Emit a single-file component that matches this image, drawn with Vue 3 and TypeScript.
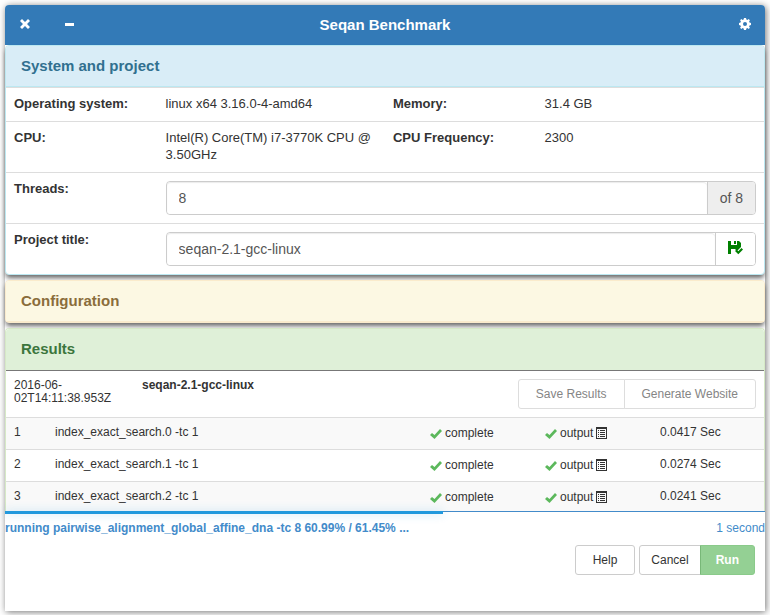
<script setup lang="ts">
import { ref } from 'vue'

interface ResultRow {
  id: number
  name: string
  seconds: string
}

const threads = ref('8')
const maxThreads = 8
const projectTitle = ref('seqan-2.1-gcc-linux')

const results: ResultRow[] = [
  { id: 1, name: 'index_exact_search.0 -tc 1', seconds: '0.0417' },
  { id: 2, name: 'index_exact_search.1 -tc 1', seconds: '0.0274' },
  { id: 3, name: 'index_exact_search.2 -tc 1', seconds: '0.0241' },
]

const progress = ref(57.6)
</script>

<template>
  <div class="window">
    <header class="titlebar">
      <div class="titlebar-actions">
        <button type="button" class="icon-button" aria-label="Close">
          <svg width="12" height="12" viewBox="0 0 12 12">
            <path d="M3 1 6 4 9 1 11 3 8 6 11 9 9 11 6 8 3 11 1 9 4 6 1 3Z" fill="currentColor" />
          </svg>
        </button>
        <button type="button" class="icon-button" aria-label="Minimize">
          <svg width="12" height="12" viewBox="0 0 12 12">
            <rect x="1" y="5" width="9" height="3" fill="currentColor" />
          </svg>
        </button>
      </div>
      <h1>Seqan Benchmark</h1>
      <div class="titlebar-actions end">
        <button type="button" class="icon-button" aria-label="Settings">
          <svg width="12" height="12" viewBox="0 0 12 12">
            <path
              fill="currentColor"
              fill-rule="evenodd"
              d="M5 0H7L7.4 1.5 8.4 1.9 9.7 1.1 10.9 2.3 10.1 3.6 10.5 4.6 12 5V7L10.5 7.4 10.1 8.4 10.9 9.7 9.7 10.9 8.4 10.1 7.4 10.5 7 12H5L4.6 10.5 3.6 10.1 2.3 10.9 1.1 9.7 1.9 8.4 1.5 7.4 0 7V5L1.5 4.6 1.9 3.6 1.1 2.3 2.3 1.1 3.6 1.9 4.6 1.5ZM6 4a2 2 0 1 0 0 4 2 2 0 0 0 0-4Z"
            />
          </svg>
        </button>
      </div>
    </header>

    <section class="panel info">
      <h2>System and project</h2>
      <table class="system">
        <tbody>
          <tr>
            <th scope="row">Operating system:</th>
            <td class="wide">linux x64 3.16.0-4-amd64</td>
            <th scope="row">Memory:</th>
            <td class="wide">31.4 GB</td>
          </tr>
          <tr>
            <th scope="row">CPU:</th>
            <td>Intel(R) Core(TM) i7-3770K CPU @ 3.50GHz</td>
            <th scope="row">CPU Frequency:</th>
            <td>2300</td>
          </tr>
          <tr>
            <th scope="row"><label for="threads">Threads:</label></th>
            <td colspan="3">
              <div class="input-group">
                <input id="threads" v-model="threads" type="text" />
                <span class="addon">of {{ maxThreads }}</span>
              </div>
            </td>
          </tr>
          <tr>
            <th scope="row"><label for="title">Project title:</label></th>
            <td colspan="3">
              <div class="input-group">
                <input id="title" v-model="projectTitle" type="text" />
                <button type="button" class="save" aria-label="Save project title">
                  <svg width="15" height="16" viewBox="0 0 15 16">
                    <path
                      fill="currentColor"
                      d="M0 0H3V4H9V0H11L13 2V6L9 10L7 8H3V13H0ZM6 0H8V3H6ZM7 10 8.5 8.5 10.3 10.3 13.5 7 15 8.5 10.3 13.3Z"
                    />
                  </svg>
                </button>
              </div>
            </td>
          </tr>
        </tbody>
      </table>
    </section>

    <section class="panel warning">
      <h2>Configuration</h2>
    </section>

    <section class="panel success">
      <h2>Results</h2>
      <div class="run-header">
        <time>2016-06-02T14:11:38.953Z</time>
        <strong>seqan-2.1-gcc-linux</strong>
        <div class="button-group">
          <button type="button" class="button" disabled>Save Results</button>
          <button type="button" class="button" disabled>Generate Website</button>
        </div>
      </div>
      <table class="results">
        <tbody>
          <tr v-for="row in results" :key="row.id">
            <td class="number">{{ row.id }}</td>
            <td>{{ row.name }}</td>
            <td class="state">
              <span class="status">
                <svg class="check" width="12" height="10" viewBox="0 0 12 10">
                  <path d="M0 6 2 4 4.5 6 10 0 12 2 4.5 10Z" fill="currentColor" />
                </svg>
                complete
              </span>
            </td>
            <td class="state">
              <span class="status">
                <svg class="check" width="12" height="10" viewBox="0 0 12 10">
                  <path d="M0 6 2 4 4.5 6 10 0 12 2 4.5 10Z" fill="currentColor" />
                </svg>
                output
                <svg width="11" height="13" viewBox="0 0 11 13">
                  <path
                    fill="currentColor"
                    fill-rule="evenodd"
                    d="M0 0H11V12H0ZM1 2V11H10V2ZM2 3H3V4H2ZM4 3H9V4H4ZM2 5H3V6H2ZM4 5H9V6H4ZM2 7H3V8H2ZM4 7H9V8H4ZM2 9H3V10H2ZM4 9H9V10H4Z"
                  />
                </svg>
              </span>
            </td>
            <td class="seconds">{{ row.seconds }} Sec</td>
          </tr>
        </tbody>
      </table>
    </section>

    <footer class="footer">
      <div class="progress"><div class="progress-bar" :style="{ width: progress + '%' }"></div></div>
      <div class="message">
        <strong>running pairwise_alignment_global_affine_dna -tc 8 60.99% / 61.45% ...</strong>
        <span>1 second</span>
      </div>
      <div class="footer-actions">
        <button type="button" class="button">Help</button>
        <div class="button-group">
          <button type="button" class="button cancel">Cancel</button>
          <button type="button" class="button run" disabled>Run</button>
        </div>
      </div>
    </footer>
  </div>
</template>

<style>
body {
  background: #fff;
}
</style>

<style scoped>
* {
  box-sizing: border-box;
}

.window {
  display: flex;
  flex-direction: column;
  height: calc(100vh - 9px);
  margin: 5px 5px 4px;
  border-radius: 4px 4px 0 0;
  background: #fff;
  box-shadow: 1px 1px 7px rgba(0, 0, 0, 0.55);
  color: #333;
  font: 12px/17px "Liberation Sans", Arial, sans-serif;
}

button,
input {
  font: inherit;
}

h1,
h2 {
  margin: 0;
  font-size: 15px;
  line-height: 20px;
}

.titlebar {
  display: grid;
  grid-template-columns: 1fr auto 1fr;
  align-items: center;
  flex: none;
  height: 40px;
  padding: 0 14px;
  border-radius: 4px 4px 0 0;
  background: #337ab7;
  color: #fff;
}

.titlebar-actions {
  display: flex;
  gap: 33px;
}

.end {
  justify-content: flex-end;
}

.icon-button {
  display: flex;
  padding: 0 0 2px;
  border: 0;
  background: none;
  color: inherit;
}

.panel {
  flex: none;
  margin-bottom: 5px;
  border: 1px solid;
  border-radius: 4px;
  background: #fff;
  box-shadow: 0 4px 5px -1px rgba(0, 0, 0, 0.6);
}

.panel h2 {
  padding: 10px 15px;
  border-radius: 3px 3px 0 0;
}

.info,
.info h2 {
  border-color: #bce8f1;
}

.info h2 {
  border-bottom: 1px solid #bce8f1;
  background: #d9edf7;
  color: #31708f;
}

.warning {
  border-color: #faebcc;
}

.warning h2 {
  border-bottom: 1px solid #faebcc;
  background: #fcf8e3;
  color: #8a6d3b;
}

.success {
  display: flex;
  flex: 1 1 0;
  flex-direction: column;
  min-height: 0;
  margin-bottom: 0;
  overflow: hidden;
  border-color: #d6e9c6;
  border-bottom: 0;
  border-radius: 4px 4px 0 0;
  box-shadow: none;
}

.success h2 {
  padding-bottom: 11px;
  border-bottom: 1px solid #777;
  background: #dff0d8;
  color: #3c763d;
}

table {
  width: 100%;
  border-spacing: 0;
  table-layout: fixed;
}

th,
td {
  padding: 8px;
  border-top: 1px solid #ddd;
  text-align: left;
  vertical-align: top;
}

.system {
  font-size: 13px;
}

.system th,
.system td {
  padding: 7px 8px 9px;
}

.system td[colspan] {
  padding: 8px;
}

.system th {
  width: 20%;
}

.system .wide {
  width: 30%;
}

.input-group {
  display: flex;
  height: 34px;
  border: 1px solid #ccc;
  border-radius: 4px;
  color: #555;
  font-size: 14px;
}

.input-group input {
  flex: 1;
  min-width: 0;
  padding: 0 12px;
  border: 0;
  border-radius: 4px;
  background: #fff;
  box-shadow: inset 0 1px 1px rgba(0, 0, 0, 0.08);
  color: inherit;
}

.addon,
.save {
  display: flex;
  align-items: center;
  padding: 0 12px;
  border: 0;
  border-left: 1px solid #ccc;
  border-radius: 0 3px 3px 0;
}

.addon {
  background: #eee;
}

.save {
  background: #fff;
  color: #008000;
}

.run-header {
  display: grid;
  grid-template-columns: 112px 1fr auto;
  flex: none;
  gap: 16px;
  padding: 8px;
}

.run-header time,
.run-header strong {
  line-height: 13px;
}

.button-group {
  display: flex;
}

.button {
  height: 30px;
  padding: 0 17px;
  border: 1px solid #ccc;
  border-radius: 3px;
  background: #fff;
  color: #333;
}

.run-header .button {
  border-color: #ddd;
  color: #858585;
}

.button-group .button:first-child {
  border-radius: 3px 0 0 3px;
}

.button-group .button:last-child {
  margin-left: -1px;
  border-radius: 0 3px 3px 0;
}

.results td {
  height: 32px;
  padding: 6px 8px;
  line-height: 17px;
}

.results tr:nth-child(odd) {
  background: #f9f9f9;
}

.results .number {
  width: 41px;
}

.results .state {
  width: 115px;
  padding: 7px 8px;
}

.results .seconds {
  width: 112px;
}

.status {
  display: flex;
  align-items: center;
  gap: 3px;
}

.check {
  color: #5cb85c;
}

.footer {
  flex: none;
  height: 100px;
}

.progress {
  height: 3px;
  border-top: 1px solid #428bca;
}

.progress-bar {
  height: 3px;
  margin-top: -1px;
  background: #2299dd;
  box-shadow: 0 0 10px rgba(34, 153, 221, 0.3);
}

.message {
  display: flex;
  justify-content: space-between;
  padding-top: 6px;
  color: #428bca;
}

.footer-actions {
  display: flex;
  justify-content: flex-end;
  gap: 4px;
  padding: 8px 10px;
}

.footer-actions .cancel {
  padding: 0 11px;
}

.footer-actions .run {
  padding: 0 15px;
  border-color: #4cae4c;
  background: #5cb85c;
  color: #fff;
  font-weight: bold;
  opacity: 0.65;
}
</style>
